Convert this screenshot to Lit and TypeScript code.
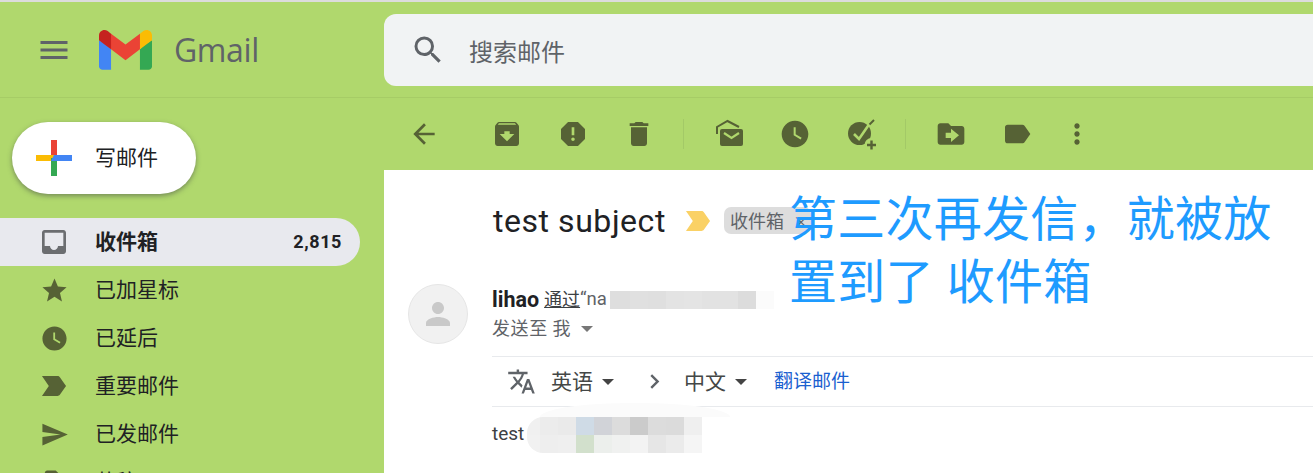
import { LitElement, html, css, svg } from "lit";
import { customElement } from "lit/decorators.js";

const P = {
  menu: "M3 18h18v-2H3v2zm0-5h18v-2H3v2zm0-7v2h18V6H3z",
  search: "M15.5 14h-.79l-.28-.27A6.471 6.471 0 0 0 16 9.5 6.5 6.5 0 1 0 9.5 16c1.61 0 3.09-.59 4.23-1.57l.27.28v.79l5 4.99L20.49 19l-4.99-5zm-6 0C7.01 14 5 11.99 5 9.5S7.01 5 9.5 5 14 7.01 14 9.5 11.99 14 9.5 14z",
  inbox: "M19 3H5c-1.1 0-2 .9-2 2v14c0 1.1.9 2 2 2h14c1.1 0 2-.9 2-2V5c0-1.1-.9-2-2-2zm0 12h-4c0 1.66-1.34 3-3 3s-3-1.34-3-3H5V5h14v10z",
  star: "M12 17.27L18.18 21l-1.64-7.03L22 9.24l-7.19-.61L12 2 9.19 8.63 2 9.24l5.46 4.73L5.82 21z",
  clock: "M12 2C6.5 2 2 6.5 2 12s4.5 10 10 10 10-4.5 10-10S17.5 2 12 2zm4.2 14.2L11 13V7h1.5v5.2l4.5 2.7-.8 1.3z",
  important: "M3.5 18.99l11 .01c.67 0 1.27-.33 1.63-.84L20.5 12l-4.37-6.16c-.36-.51-.96-.84-1.63-.84l-11 .01L8.34 12 3.5 18.99z",
  send: "M2.01 21L23 12 2.01 3 2 10l15 2-15 2z",
  draft: "M13 2H6c-1.1 0-1.99.9-1.99 2L4 20c0 1.1.89 2 1.99 2H18c1.1 0 2-.9 2-2V9l-7-7z",
  back: "M20 11H7.83l5.59-5.59L12 4l-8 8 8 8 1.41-1.41L7.83 13H20v-2z",
  archive: "M20.54 5.23l-1.39-1.68C18.88 3.21 18.47 3 18 3H6c-.47 0-.88.21-1.16.55L3.46 5.23C3.17 5.57 3 6.02 3 6.5V19c0 1.1.9 2 2 2h14c1.1 0 2-.9 2-2V6.5c0-.48-.17-.93-.46-1.27zM12 17.5L6.5 12H10v-2h4v2h3.5L12 17.5zM5.12 5l.81-1h12l.94 1H5.12z",
  spam: "M15.73 3H8.27L3 8.27v7.46L8.27 21h7.46L21 15.73V8.27L15.73 3zM12 17.3c-.72 0-1.3-.58-1.3-1.3 0-.72.58-1.3 1.3-1.3.72 0 1.3.58 1.3 1.3 0 .72-.58 1.3-1.3 1.3zm1-4.3h-2V7h2v6z",
  trash: "M6 19c0 1.1.9 2 2 2h8c1.1 0 2-.9 2-2V7H6v12zM19 4h-3.5l-1-1h-5l-1 1H5v2h14V4z",
  move: "M20 6h-8l-2-2H4c-1.1 0-1.99.9-1.99 2L2 18c0 1.1.9 2 2 2h16c1.1 0 2-.9 2-2V8c0-1.1-.9-2-2-2zm-8 12v-3H8v-4h4V8l6 5-6 5z",
  label: "M17.63 5.84C17.27 5.33 16.67 5 16 5L5 5.01C3.9 5.01 3 5.9 3 7v10c0 1.1.9 1.99 2 1.99L16 19c.67 0 1.27-.33 1.63-.84L22 12l-4.37-6.16z",
  more: "M12 8c1.1 0 2-.9 2-2s-.9-2-2-2-2 .9-2 2 .9 2 2 2zm0 2c-1.1 0-2 .9-2 2s.9 2 2 2 2-.9 2-2-.9-2-2-2zm0 6c-1.1 0-2 .9-2 2s.9 2 2 2 2-.9 2-2-.9-2-2-2z",
  translate: "M12.87 15.07l-2.54-2.51.03-.03c1.74-1.94 2.98-4.17 3.71-6.53H17V4h-7V2H8v2H1v1.99h11.17C11.5 7.92 10.44 9.75 9 11.35 8.07 10.32 7.3 9.19 6.69 8h-2c.73 1.63 1.73 3.17 2.98 4.56l-5.09 5.02L4 19l5-5 3.11 3.11.76-2.04zM18.5 10h-2L12 22h2l1.12-3h4.75L21 22h2l-4.5-12zm-2.62 7l1.62-4.33L19.12 17h-3.24z",
  chevron: "M10 6L8.59 7.41 13.17 12l-4.58 4.59L10 18l6-6z",
  person: "M12 12c2.21 0 4-1.79 4-4s-1.79-4-4-4-4 1.79-4 4 1.79 4 4 4zm0 2c-2.67 0-8 1.34-8 4v2h16v-2c0-2.66-5.33-4-8-4z",
};

const ic = (d: string, cls: string) => html`<svg class=${cls} viewBox="0 0 24 24"><path d=${d} fill="currentColor"></path></svg>`;

const nameBlur = ["#dedede", "#e0e0e0", "#dfdfdf", "#e3e3e3", "#e4e4e4", "#e2e2e2", "#e2e2e2", "#dcdcdc", "#fbfbfb"];
const bodyBlur = [
  "#f0f0f0", "#ececec", "#eaeaea", "#cfdbe6", "#d1d3d8", "#dcdcdc", "#cbcbcb", "#dcdcdc", "#dbdbdb", "#efefef",
  "#f1f1f1", "#eeeeee", "#efefef", "#d2e0cc", "#ecefec", "#f0f1f0", "#f3f3f3", "#e6e6e6", "#ebebeb", "#f5f5f5",
];

@customElement("app-root")
export class AppRoot extends LitElement {
  static styles = css`
    :host { display: block; height: 473px; overflow: hidden; position: relative; background: #b0d86d; font-family: "Noto Sans CJK SC", "Noto Sans", sans-serif; color: #202124; }
    svg { display: block; flex: none; }
    .strip { height: 2px; background: #dcdcdc; }
    .head { height: 95px; display: flex; align-items: center; border-bottom: 1px solid #a6cc66; box-sizing: content-box; }
    .brand { width: 384px; flex: none; display: flex; align-items: center; }
    .burger { width: 36px; height: 36px; margin-left: 36px; color: #5f6368; }
    .logo { width: 53px; height: 40px; margin-left: 27px; }
    .word { font-family: "Open Sans", sans-serif; font-size: 32px; color: #5f6368; margin-left: 22px; line-height: 40px; letter-spacing: -.4px; }
    .search { flex: 1; height: 72px; background: #f1f3f4; border-radius: 12px 0 0 12px; display: flex; align-items: center; margin-top: 1px; }
    .search svg { width: 36px; height: 36px; color: #5f6368; margin-left: 26px; }
    .search span { font-size: 24px; color: #5f6368; margin-left: 23px; padding-top: 1px; }
    .body { display: flex; height: 375px; }
    .side { width: 384px; flex: none; }
    .compose { margin: 24px 0 0 12px; width: 184px; height: 72px; border-radius: 36px; background: #fff; box-shadow: 0 2px 5px rgba(60,64,67,.5); display: flex; align-items: center; font-size: 21px; }
    .compose span { padding-bottom: 4px; }
    .plus { width: 36px; height: 36px; margin-left: 24px; margin-right: 23px; }
    .nav { margin-top: 24px; display: flex; flex-direction: column; }
    .row { height: 48px; width: 360px; flex: none; display: flex; align-items: center; font-size: 21px; color: #202124; border-radius: 0 24px 24px 0; position: relative; }
    .row.on { background: #e8e9ee; font-weight: 700; }
    .row .name { padding-bottom: 4px; }
    .slot { width: 54px; height: 48px; margin-left: 27px; margin-right: 14px; display: flex; align-items: center; justify-content: center; color: #566235; }
    .row.on .slot { color: #6b6d70; }
    .s29 { width: 29px; height: 29px; }
    .s32 { width: 32px; height: 32px; }
    .s34 { width: 34px; height: 34px; }
    .count { margin-left: auto; margin-right: 18px; padding-bottom: 2px; font-family: Roboto, sans-serif; font-size: 18px; letter-spacing: .6px; font-weight: 700; }
    .main { flex: 1; min-width: 0; display: flex; flex-direction: column; }
    .bar { height: 72px; flex: none; display: flex; align-items: center; color: #566235; }
    .btn { width: 66px; height: 48px; flex: none; display: flex; align-items: center; justify-content: center; }
    .btn.narrow { width: 54px; }
    .back { margin-left: 7px; margin-right: 17px; }
    .sep { width: 1px; height: 30px; background: #a3c967; margin: 0 12px 0 11px; flex: none; }
    .mail { flex: 1; background: #fff; display: flex; flex-direction: column; }
    .subject { height: 101px; padding-left: 109px; display: flex; align-items: center; flex: none; }
    .subject h1 { margin: 0; font: 400 32px/44px Roboto, sans-serif; letter-spacing: .55px; color: #202124; }
    .mark { width: 34px; height: 34px; margin-left: 15px; color: #fad165; }
    .chip { margin-left: 9px; height: 27px; width: 87px; box-sizing: border-box; padding-left: 6px; background: #ddd; border-radius: 7px; display: flex; align-items: center; gap: 9px; font-size: 18px; color: #5f6368; }
    .chip span { padding-bottom: 2px; }
    .chip i { font-style: normal; font-size: 16px; }
    .sender { height: 72px; flex: none; display: flex; padding-left: 24px; margin-top: 13px; }
    .avatar { width: 58px; height: 58px; border: 1px solid #e6e6e6; border-radius: 50%; background: #f1f1f1; color: #c9c9c9; display: flex; align-items: center; justify-content: center; flex: none; }
    .avatar svg { width: 36px; height: 36px; }
    .who { margin-left: 24px; display: flex; flex-direction: column; }
    .line1 { display: flex; align-items: center; height: 30px; font-size: 18px; color: #5f6368; white-space: nowrap; }
    .line1 b { font: 700 21.5px Roboto, sans-serif; color: #202124; margin-right: 5px; }
    .line1 u { color: #3c4043; padding-bottom: 2px; }
    .line1 .na { font-family: Roboto, sans-serif; font-size: 18.5px; margin-right: 3px; }
    .cells { display: flex; height: 18px; margin-top: 1px; }
    .cells span { width: 18px; height: 18px; }
    .cells span:first-child { width: 20px; }
    .line2 { display: flex; align-items: center; height: 30px; font-size: 18px; letter-spacing: .6px; color: #5f6368; }
    .line2 span:first-child { padding-bottom: 4px; }
    .caret { width: 0; height: 0; border: 6px solid transparent; border-top: 6px solid currentColor; border-bottom: 0; flex: none; }
    .line2 .caret { margin-left: 10px; color: #777; }
    .tr { margin-left: 108px; height: 49px; flex: none; border-top: 1px solid #e8eaed; border-bottom: 1px solid #e8eaed; display: flex; align-items: center; font-size: 21px; color: #444746; }
    .tr svg.t { width: 29px; height: 29px; margin-left: 15px; margin-right: 15px; color: #5f6368; }
    .tr .lang { padding-bottom: 4px; }
    .tr .caret { margin-left: 9px; color: #444; }
    .tr svg.c { width: 29px; height: 29px; margin-left: 26px; margin-right: 15px; color: #5f6368; }
    .tr a { margin-left: 27px; color: #1a5fd0; font-size: 19px; padding-bottom: 4px; }
    .text { display: flex; align-items: center; margin: 10px 0 0 108px; height: 36px; font: 400 19px Roboto, sans-serif; color: #3c4043; position: relative; }
    .text > span { padding-bottom: 4px; }
    .smudge { position: absolute; left: 48px; top: -14px; width: 190px; height: 14px; border-radius: 50% 50% 0 0 / 100% 100% 0 0; background: #fbfbfb; }
    .blur { margin-left: 3px; display: grid; grid-template-columns: 13px repeat(9, 18px); grid-auto-rows: 18px; border-radius: 16px 0 0 16px; overflow: hidden; position: relative; }
    .note { position: absolute; left: 789px; top: 184px; width: 510px; font-size: 48px; letter-spacing: .25px; word-spacing: 2px; line-height: 63px; color: #1e9bff; }
  `;

  private nav = [
    ["收件箱", P.inbox, "s32", "2,815", true],
    ["已加星标", P.star, "s29", "", false],
    ["已延后", P.clock, "s29", "", false],
    ["重要邮件", P.important, "s34", "", false],
    ["已发邮件", P.send, "s29", "", false],
    ["草稿", P.draft, "s29", "", false],
  ] as const;

  render() {
    return html`
      <div class="strip"></div>
      <header class="head">
        <div class="brand">
          ${ic(P.menu, "burger")}
          <svg class="logo" viewBox="0 0 256 193" preserveAspectRatio="none">
            ${svg`<path fill="#4285F4" d="M58.182 192.05V93.14L27.507 65.077 0 49.504v125.091c0 9.658 7.825 17.455 17.455 17.455h40.727Z"/>
            <path fill="#34A853" d="M197.818 192.05h40.727c9.659 0 17.455-7.826 17.455-17.455V49.505l-31.156 17.837-27.026 25.798v98.91Z"/>
            <path fill="#EA4335" d="m58.182 93.14-4.174-38.647 4.174-36.989L128 69.868l69.818-52.364 4.669 34.992-4.669 40.644L128 145.504z"/>
            <path fill="#FBBC04" d="M197.818 17.504V93.14L256 49.504V26.231c0-21.585-24.64-33.89-41.89-20.945l-16.292 12.218Z"/>
            <path fill="#C5221F" d="m0 49.504 26.759 20.07L58.182 93.14V17.504L41.89 5.286C24.61-7.66 0 4.646 0 26.23v23.273Z"/>`}
          </svg>
          <span class="word">Gmail</span>
        </div>
        <div class="search">${ic(P.search, "")}<span>搜索邮件</span></div>
      </header>
      <div class="body">
        <aside class="side">
          <div class="compose">
            <svg class="plus" viewBox="0 0 36 36">
              <rect x="15" y="0" width="6" height="18" fill="#ea4335"></rect>
              <rect x="0" y="15" width="18" height="6" fill="#fbbc04"></rect>
              <rect x="15" y="18" width="6" height="18" fill="#34a853"></rect>
              <path d="M18 15h18v6H18l-3 0z" fill="#4285f4"></path>
            </svg>
            <span>写邮件</span>
          </div>
          <nav class="nav">
            ${this.nav.map(([t, d, s, c, on]) => html`
              <div class="row ${on ? "on" : ""}">
                <div class="slot">${ic(d, s)}</div><span class="name">${t}</span>
                ${c ? html`<span class="count">${c}</span>` : ""}
              </div>`)}
          </nav>
        </aside>
        <main class="main">
          <div class="bar">
            <div class="btn back">${ic(P.back, "s32")}</div>
            <div class="btn">${ic(P.archive, "s32")}</div>
            <div class="btn">${ic(P.spam, "s32")}</div>
            <div class="btn">${ic(P.trash, "s32")}</div>
            <div class="sep"></div>
            <div class="btn">
              <svg class="s32" viewBox="0 0 32 32">
                <path d="M4 16V9L14.5 3 26 9" fill="none" stroke="currentColor" stroke-width="2"></path>
                <rect x="7" y="11" width="23" height="17" rx="2" fill="currentColor"></rect>
                <path d="M11 15l7.5 5 7.5-5" fill="none" stroke="#b0d86d" stroke-width="2.2"></path>
              </svg>
            </div>
            <div class="btn">${ic(P.clock, "s32")}</div>
            <div class="btn">
              <svg class="s32" viewBox="0 0 32 32">
                <circle cx="14.5" cy="15.5" r="11.5" fill="currentColor"></circle>
                <circle cx="26.5" cy="27" r="7" fill="#b0d86d"></circle>
                <path d="M9 16l5 5L25 5" fill="none" stroke="#b0d86d" stroke-width="2.6"></path>
                <path d="M24.5 6.5L29 2" fill="none" stroke="currentColor" stroke-width="2"></path>
                <path d="M26.5 22.5v9M22 27h9" fill="none" stroke="currentColor" stroke-width="2.4"></path>
              </svg>
            </div>
            <div class="sep"></div>
            <div class="btn">${ic(P.move, "s32")}</div>
            <div class="btn">${ic(P.label, "s32")}</div>
            <div class="btn narrow">${ic(P.more, "s32")}</div>
          </div>
          <section class="mail">
            <div class="subject">
              <h1>test subject</h1>
              ${ic(P.important, "mark")}
              <div class="chip"><span>收件箱</span><i>×</i></div>
            </div>
            <div class="sender">
              <div class="avatar">${ic(P.person, "")}</div>
              <div class="who">
                <div class="line1"><b>lihao</b><u>通过</u><span class="na">“na</span>
                  <div class="cells">${nameBlur.map((c) => html`<span style="background:${c}"></span>`)}</div>
                </div>
                <div class="line2"><span>发送至 我</span><span class="caret"></span></div>
              </div>
            </div>
            <div class="tr">
              ${ic(P.translate, "t")}
              <span class="lang">英语</span><span class="caret"></span>
              ${ic(P.chevron, "c")}
              <span class="lang">中文</span><span class="caret"></span>
              <a>翻译邮件</a>
            </div>
            <div class="text"><div class="smudge"></div><span>test</span>
              <div class="blur">${bodyBlur.map((c) => html`<span style="background:${c}"></span>`)}</div>
            </div>
          </section>
        </main>
      </div>
      <div class="note">第三次再发信，就被放<br />置到了 收件箱</div>
    `;
  }
}
